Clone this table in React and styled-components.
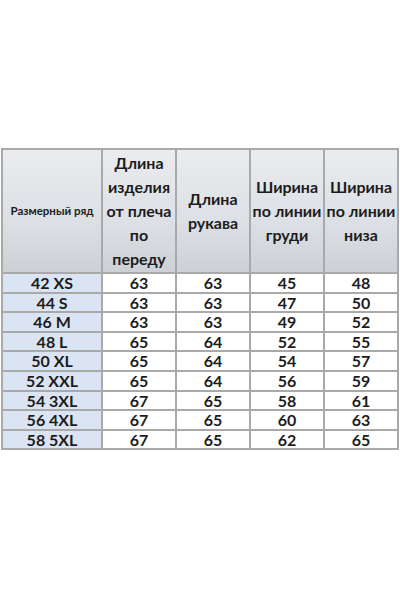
import React from 'react';
import styled, { createGlobalStyle } from 'styled-components';

const GlobalStyle = createGlobalStyle`
    html, body {
        margin: 0;
        padding: 0;
        background: #ffffff;
    }
    body {
        font-family: Lato, "Open Sans", sans-serif;
        color: #1c1c1c;
    }
`;

const Page = styled.div`
    width: 400px;
    height: 600px;
    padding-top: 148px;
    padding-left: 1px;
    box-sizing: border-box;
`;

const Table = styled.table`
    border-collapse: collapse;
    table-layout: fixed;
    width: 398px;
`;

const Col = styled.col`
    width: ${(p) => (p.$wide ? '100px' : '74px')};
`;

const HeadCell = styled.th`
    height: 122px;
    padding: 0 1px;
    border: 2px solid #a9a9a9;
    background: linear-gradient(to bottom, #eaecef 0%, #dcdfe4 60%, #cdd0d5 100%);
    font-weight: 700;
    font-size: ${(p) => (p.$small ? '11.5px' : '16px')};
    line-height: 24px;
    text-align: center;
    vertical-align: middle;
    color: #1c1c1c;
`;

const Cell = styled.td`
    height: 15.6px;
    padding: 1px 0;
    border: 2px solid #a9a9a9;
    background: ${(p) => (p.$size ? '#dbe4f3' : '#ffffff')};
    font-weight: 700;
    font-size: 16px;
    line-height: 15.6px;
    text-align: center;
    color: #1c1c1c;
`;

const rows = [
    ['42 XS', 63, 63, 45, 48],
    ['44 S', 63, 63, 47, 50],
    ['46 M', 63, 63, 49, 52],
    ['48 L', 65, 64, 52, 55],
    ['50 XL', 65, 64, 54, 57],
    ['52 XXL', 65, 64, 56, 59],
    ['54 3XL', 67, 65, 58, 61],
    ['56 4XL', 67, 65, 60, 63],
    ['58 5XL', 67, 65, 62, 65],
];

const App = () => (
    <Page>
        <GlobalStyle />
        <Table>
            <colgroup>
                <Col $wide />
                <Col />
                <Col />
                <Col />
                <Col />
            </colgroup>
            <thead>
                <tr>
                    <HeadCell $small>Размерный ряд</HeadCell>
                    <HeadCell>Длина<br />изделия<br />от плеча<br />по<br />переду</HeadCell>
                    <HeadCell>Длина<br />рукава</HeadCell>
                    <HeadCell>Ширина<br />по линии<br />груди</HeadCell>
                    <HeadCell>Ширина<br />по линии<br />низа</HeadCell>
                </tr>
            </thead>
            <tbody>
                {rows.map((r) => (
                    <tr key={r[0]}>
                        <Cell $size>{r[0]}</Cell>
                        {r.slice(1).map((v, i) => (
                            <Cell key={i}>{v}</Cell>
                        ))}
                    </tr>
                ))}
            </tbody>
        </Table>
    </Page>
);

export default App;
